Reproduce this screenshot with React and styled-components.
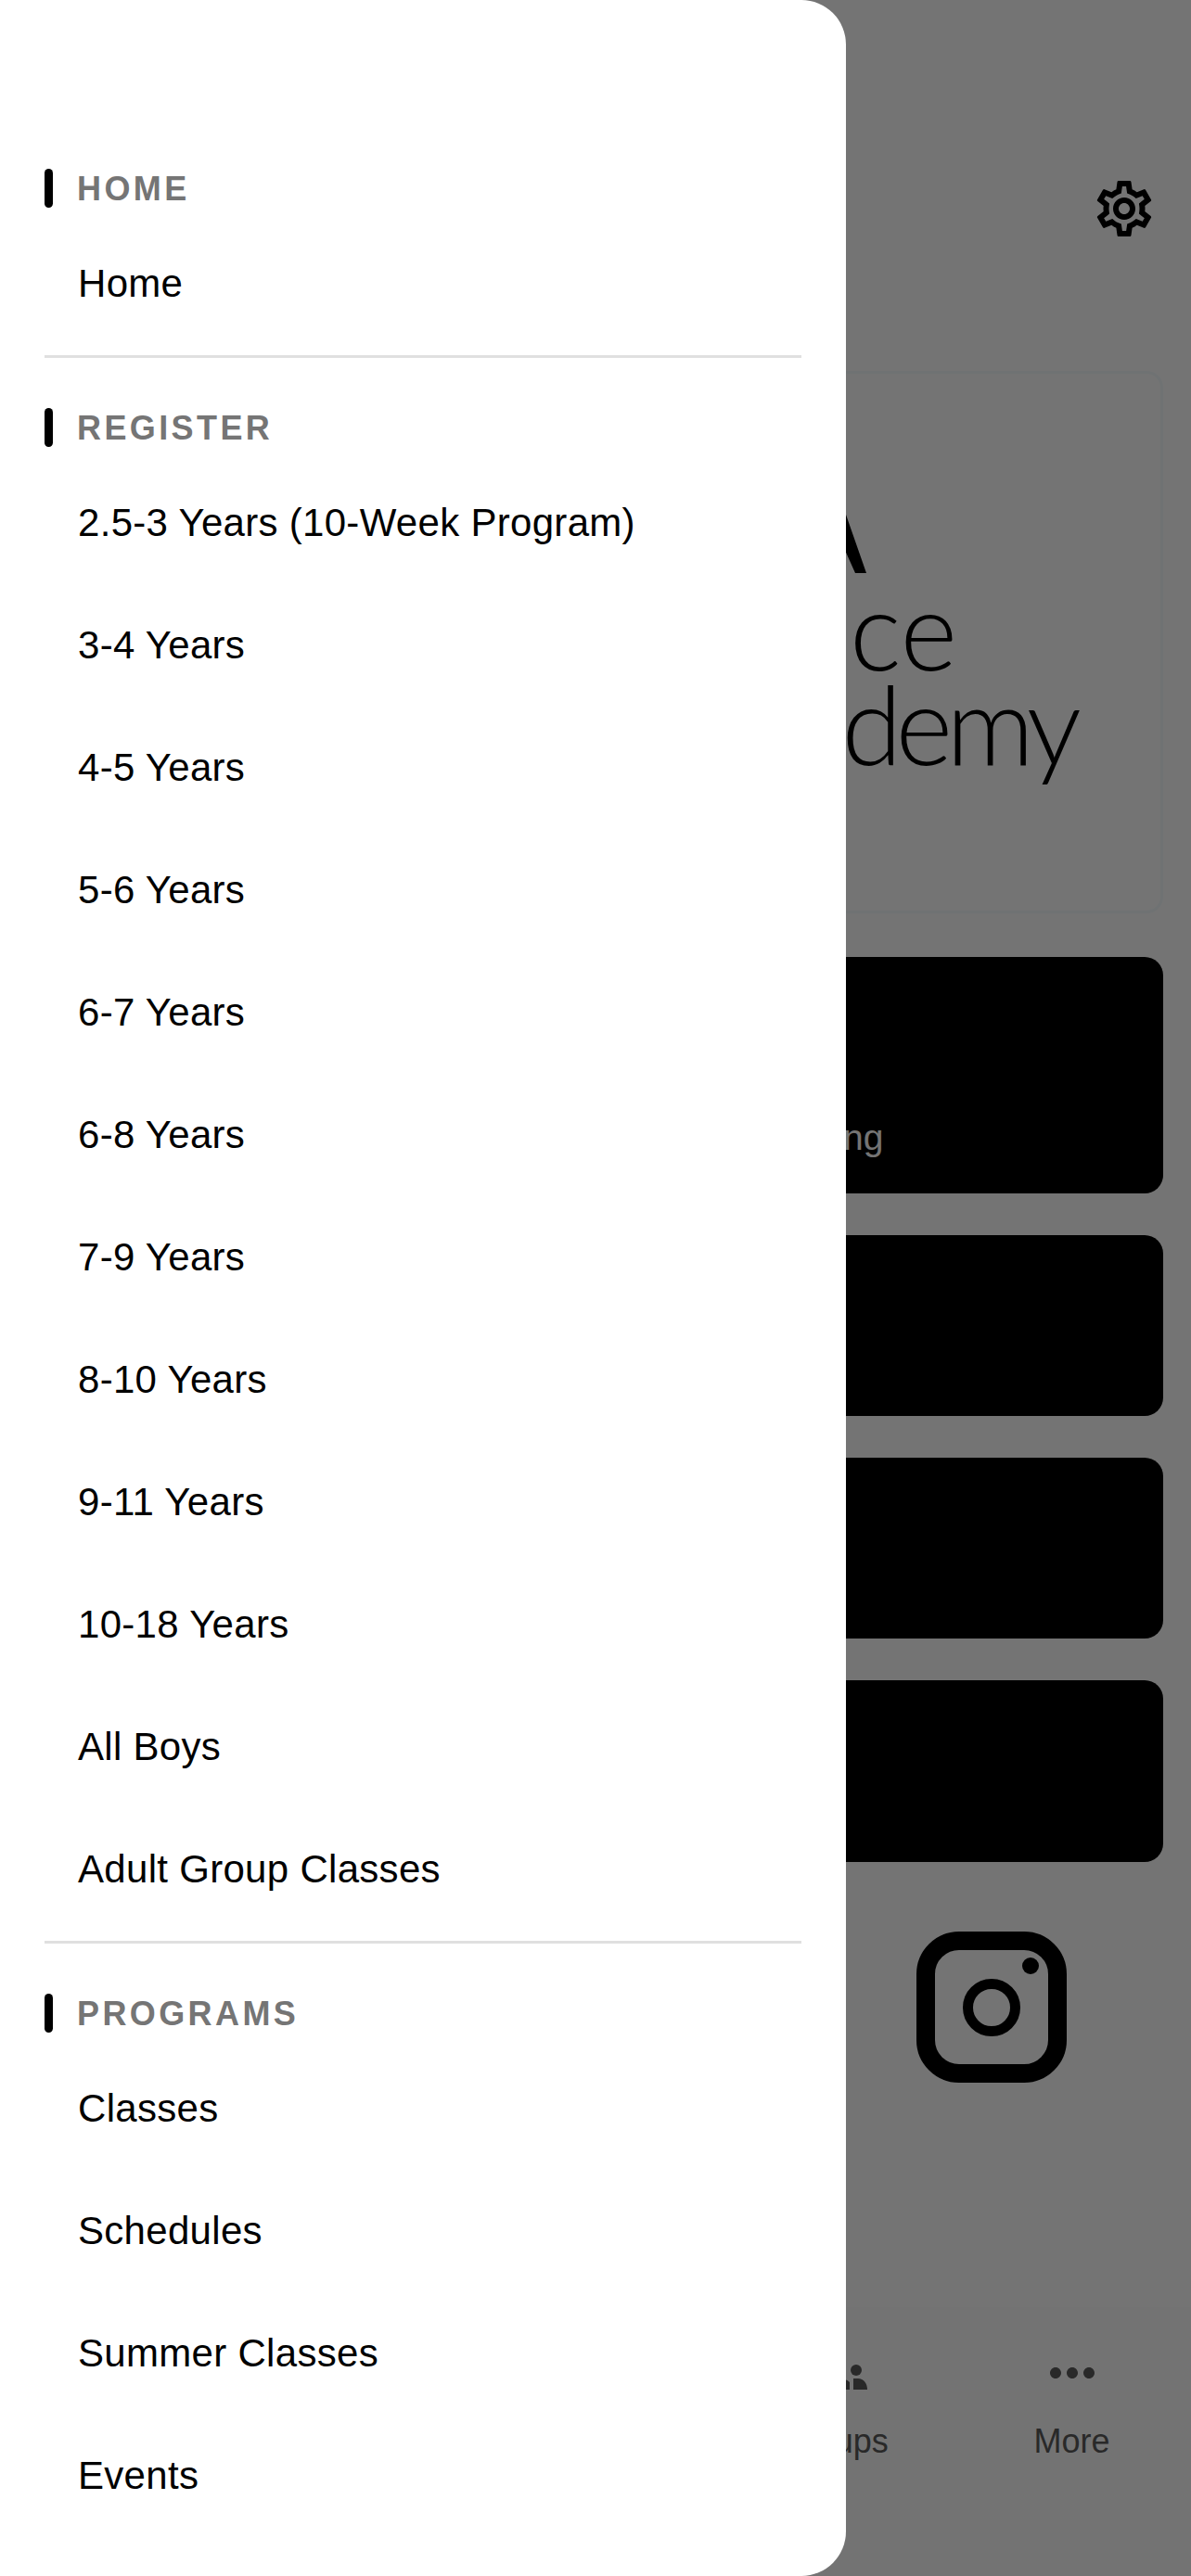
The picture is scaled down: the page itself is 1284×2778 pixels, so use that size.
import styled, { createGlobalStyle } from "styled-components";
import { MdMoreHoriz, MdOutlineSettings } from "react-icons/md";

const GlobalStyle = createGlobalStyle`
  html, body {
    margin: 0;
    padding: 0;
    background: #fff;
  }
  * {
    box-sizing: border-box;
  }
`;

const Screen = styled.div`
  position: relative;
  width: 1284px;
  height: 2778px;
  overflow: hidden;
  font-family: "Liberation Sans", Arial, sans-serif;
`;

const Page = styled.div`
  height: 100%;
  display: flex;
  flex-direction: column;
  padding-top: 189px;
  background: #fff;
`;

const TopBar = styled.div`
  display: flex;
  justify-content: flex-end;
  padding-right: 36px;
  color: #000;
`;

const Content = styled.div`
  display: flex;
  flex-direction: column;
  padding: 139px 30px 0;
`;

const LogoCard = styled.div`
  height: 585px;
  border: 3px solid #f5fbfd;
  border-radius: 18px;
  padding-top: 152px;
  margin-bottom: 47px;
`;

const LogoMark = styled.svg`
  display: block;
  width: 1000px;
  height: 63px;
  margin-bottom: 9px;
`;

const LogoLine = styled.div`
  font-family: Lato, sans-serif;
  font-weight: 300;
  font-size: 118px;
  line-height: 102px;
  letter-spacing: ${(p) => p.$tracking}px;
  color: #000;
  text-align: right;
  width: ${(p) => p.$width}px;
`;

const LinkButton = styled.div`
  height: ${(p) => p.$height}px;
  margin-bottom: 45px;
  background: #000;
  border-radius: 20px;
  color: #fff;
  font-size: 39px;
  display: flex;
  align-items: flex-end;
  padding: 0 0 38px 783px;
`;

const SocialRow = styled.div`
  display: flex;
  justify-content: flex-end;
  padding: 30px 134px 0 0;
`;

const InstagramIcon = styled.svg`
  display: block;
  width: 162px;
  height: 163px;
`;

const TabBar = styled.nav`
  margin-top: auto;
  height: 290px;
  padding-top: 35px;
  display: flex;
  justify-content: flex-end;
  background: #fdfdfd;
`;

const Tab = styled.div`
  width: 20%;
  display: flex;
  flex-direction: column;
  align-items: center;
  color: #5a5a5a;
`;

const TabIcon = styled.svg`
  display: block;
  width: 72px;
  height: 72px;
`;

const TabLabel = styled.span`
  margin-top: 17px;
  font-size: 36px;
  line-height: 42px;
`;

const Scrim = styled.div`
  position: absolute;
  inset: 0;
  background: rgba(0, 0, 0, 0.545);
`;

const Drawer = styled.aside`
  position: absolute;
  top: 0;
  left: 0;
  bottom: 0;
  width: 912px;
  padding: 182px 48px 0;
  background: #fff;
  border-radius: 0 48px 48px 0;
  overflow: hidden;
`;

const Section = styled.section`
  & + & {
    margin-top: 54px;
  }
`;

const SectionHeader = styled.div`
  display: flex;
  align-items: center;
  gap: 26px;
  height: 42px;
  margin-bottom: 15px;
`;

const SectionBar = styled.span`
  width: 9px;
  height: 42px;
  background: #000;
  border-radius: 5px;
`;

const SectionTitle = styled.h2`
  margin: 0;
  padding-top: 2px;
  font-size: 36px;
  font-weight: 700;
  letter-spacing: 3.4px;
  color: #757575;
`;

const MenuItem = styled.div`
  height: 132px;
  padding: 2px 0 0 36px;
  display: flex;
  align-items: center;
  font-size: 42px;
  letter-spacing: 0.3px;
  color: #000;
`;

const Divider = styled.div`
  height: 3px;
  margin-top: 12px;
  background: #e0e0e0;
`;

const sections = [
  { title: "HOME", items: ["Home"] },
  {
    title: "REGISTER",
    items: [
      "2.5-3 Years (10-Week Program)",
      "3-4 Years",
      "4-5 Years",
      "5-6 Years",
      "6-7 Years",
      "6-8 Years",
      "7-9 Years",
      "8-10 Years",
      "9-11 Years",
      "10-18 Years",
      "All Boys",
      "Adult Group Classes",
    ],
  },
  { title: "PROGRAMS", items: ["Classes", "Schedules", "Summer Classes", "Events"] },
];

export default function App() {
  return (
    <Screen>
      <GlobalStyle />
      <Page>
        <TopBar>
          <MdOutlineSettings size={72} />
        </TopBar>
        <Content>
          <LogoCard>
            <LogoMark viewBox="0 0 1000 63">
              <polygon points="855,0 879,0 901,63 889,63 868,16 850,63 838,63" fill="#000" />
            </LogoMark>
            <LogoLine $width={999} $tracking={0}>
              Dance
            </LogoLine>
            <LogoLine $width={1126} $tracking={-7}>
              Academy
            </LogoLine>
          </LogoCard>
          <LinkButton $height={255}>Training</LinkButton>
          <LinkButton $height={195} />
          <LinkButton $height={195} />
          <LinkButton $height={196} />
        </Content>
        <SocialRow>
          <InstagramIcon viewBox="0 0 162 163">
            <rect x="10" y="10" width="142" height="143" rx="36" fill="none" stroke="#000" strokeWidth="20" />
            <circle cx="81" cy="82" r="25.5" fill="none" stroke="#000" strokeWidth="11" />
            <circle cx="123" cy="37" r="9" fill="#000" />
          </InstagramIcon>
        </SocialRow>
        <TabBar>
          <Tab>
            <TabIcon viewBox="0 0 72 72">
              <circle cx="60" cy="33" r="6" fill="currentColor" />
              <path d="M57 42h5c6 0 10 5 10 12H57z" fill="currentColor" />
              <path d="M36 54H53V46c-3-3-8-4-10-4h-7z" fill="currentColor" />
            </TabIcon>
            <TabLabel>Groups</TabLabel>
          </Tab>
          <Tab>
            <MdMoreHoriz size={72} />
            <TabLabel>More</TabLabel>
          </Tab>
        </TabBar>
      </Page>
      <Scrim />
      <Drawer>
        {sections.map((section, i) => (
          <Section key={section.title}>
            <SectionHeader>
              <SectionBar />
              <SectionTitle>{section.title}</SectionTitle>
            </SectionHeader>
            {section.items.map((item) => (
              <MenuItem key={item}>{item}</MenuItem>
            ))}
            {i < sections.length - 1 && <Divider />}
          </Section>
        ))}
      </Drawer>
    </Screen>
  );
}
